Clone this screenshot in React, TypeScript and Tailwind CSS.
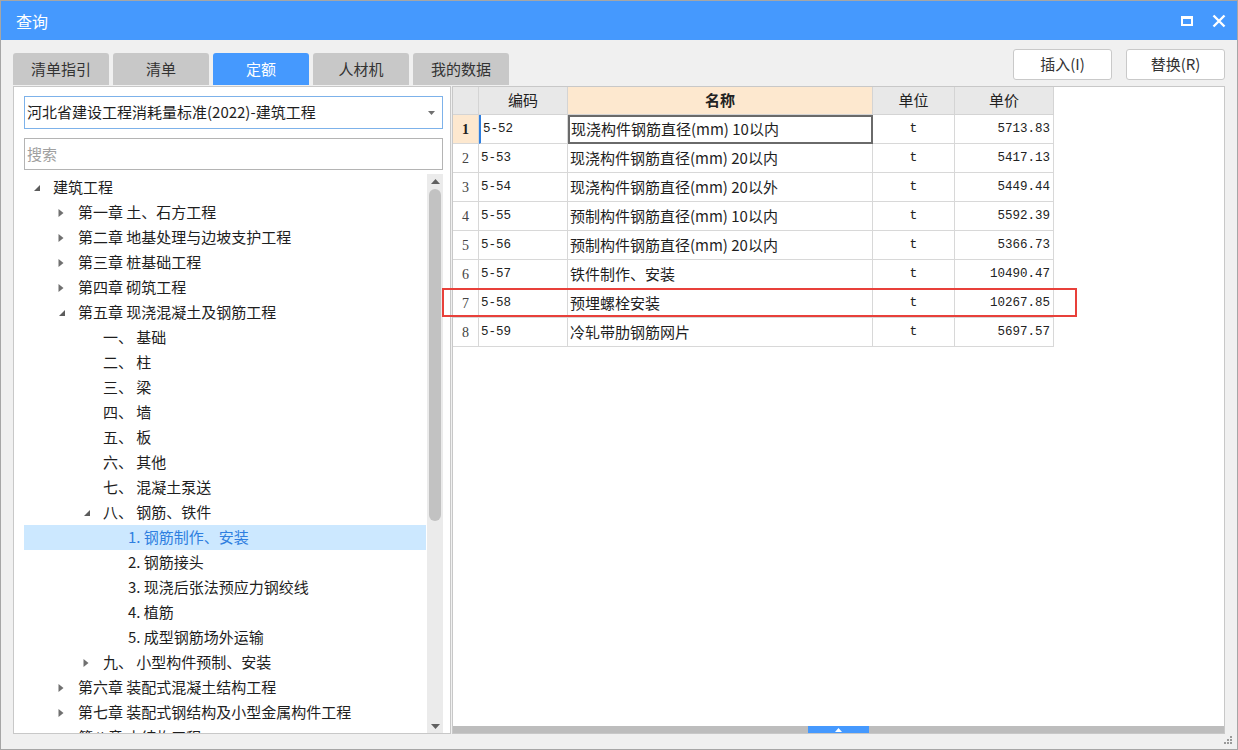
import React from "react";

type TreeNode = {
  level: number;
  label: string;
  state?: "open" | "closed";
  selected?: boolean;
};

const tree: TreeNode[] = [
  { level: 0, label: "建筑工程", state: "open" },
  { level: 1, label: "第一章 土、石方工程", state: "closed" },
  { level: 1, label: "第二章 地基处理与边坡支护工程", state: "closed" },
  { level: 1, label: "第三章 桩基础工程", state: "closed" },
  { level: 1, label: "第四章 砌筑工程", state: "closed" },
  { level: 1, label: "第五章 现浇混凝土及钢筋工程", state: "open" },
  { level: 2, label: "一、 基础" },
  { level: 2, label: "二、 柱" },
  { level: 2, label: "三、 梁" },
  { level: 2, label: "四、 墙" },
  { level: 2, label: "五、 板" },
  { level: 2, label: "六、 其他" },
  { level: 2, label: "七、 混凝土泵送" },
  { level: 2, label: "八、 钢筋、铁件", state: "open" },
  { level: 3, label: "1. 钢筋制作、安装", selected: true },
  { level: 3, label: "2. 钢筋接头" },
  { level: 3, label: "3. 现浇后张法预应力钢绞线" },
  { level: 3, label: "4. 植筋" },
  { level: 3, label: "5. 成型钢筋场外运输" },
  { level: 2, label: "九、 小型构件预制、安装", state: "closed" },
  { level: 1, label: "第六章 装配式混凝土结构工程", state: "closed" },
  { level: 1, label: "第七章 装配式钢结构及小型金属构件工程", state: "closed" },
  { level: 1, label: "第八章 木结构工程", state: "closed" },
];

const indent = ["pl-[8px]", "pl-[33px]", "pl-[58px]", "pl-[83px]"];

const rows = [
  ["5-52", "现浇构件钢筋直径(mm) 10以内", "t", "5713.83"],
  ["5-53", "现浇构件钢筋直径(mm) 20以内", "t", "5417.13"],
  ["5-54", "现浇构件钢筋直径(mm) 20以外", "t", "5449.44"],
  ["5-55", "预制构件钢筋直径(mm) 10以内", "t", "5592.39"],
  ["5-56", "预制构件钢筋直径(mm) 20以内", "t", "5366.73"],
  ["5-57", "铁件制作、安装", "t", "10490.47"],
  ["5-58", "预埋螺栓安装", "t", "10267.85"],
  ["5-59", "冷轧带肋钢筋网片", "t", "5697.57"],
];

const tabs = ["清单指引", "清单", "定额", "人材机", "我的数据"];

function Arrow({ state }: { state?: "open" | "closed" }) {
  if (state === "open")
    return (
      <svg width="8" height="8" viewBox="0 0 8 8" className="ml-[1px]">
        <polygon points="7,1 7,7 1,7" fill="#5c5c5c" />
      </svg>
    );
  if (state === "closed")
    return (
      <svg width="6" height="10" viewBox="0 0 6 10" className="ml-[1px]">
        <polygon points="0.5,1 5.5,5 0.5,9" fill="#707070" />
      </svg>
    );
  return null;
}

function TreeRow({ node }: { node: TreeNode }) {
  return (
    <div
      className={`flex shrink-0 items-center h-[25px] w-[402px] ${indent[node.level]} ${
        node.selected ? "bg-[#cce8ff] text-[#2f7fe0]" : "text-[#1e1e1e]"
      }`}
    >
      <div className="w-[21px] flex items-center">
        <Arrow state={node.state} />
      </div>
      <span className="whitespace-pre">{node.label}</span>
    </div>
  );
}

export default function App() {
  return (
    <div className="relative w-[1238px] h-[750px] border border-[#a6a6a6] bg-[#f0f0f0] flex flex-col font-['Noto_Sans_CJK_SC','Noto_Sans',sans-serif] text-[15px] overflow-hidden">
      {/* title bar */}
      <div className="h-[39px] bg-[#4599fe] flex items-center justify-between pl-[15px] pr-[11px] text-white">
        <span className="text-[16px]">查询</span>
        <div className="flex items-center gap-[19px]">
          <svg width="12" height="10" viewBox="0 0 12 10">
            <rect x="1" y="1.5" width="10" height="7.5" fill="none" stroke="white" strokeWidth="2" />
            <rect x="0" y="0" width="12" height="3" fill="white" />
          </svg>
          <svg width="14" height="14" viewBox="0 0 14 14">
            <path d="M1.5 1.5 L12.5 12.5 M12.5 1.5 L1.5 12.5" stroke="white" strokeWidth="2.4" />
          </svg>
        </div>
      </div>

      <div className="flex flex-col px-[12px]">
        {/* tabs + buttons */}
        <div className="pt-[9px] h-[46px] flex items-start justify-between">
          <div className="flex gap-[4px] mt-[4px]">
            {tabs.map((t) => (
              <div
                key={t}
                className={`w-[96px] h-[32px] rounded-t-[3px] flex items-center justify-center ${
                  t === "定额" ? "bg-[#4599fe] text-white" : "bg-[#c8c8c8] text-[#333]"
                }`}
              >
                {t}
              </div>
            ))}
          </div>
          <div className="flex gap-[14px]">
            <button className="w-[99px] h-[31px] bg-white border border-[#c9c9c9] rounded-[3px] text-[#333]">
              插入(I)
            </button>
            <button className="w-[99px] h-[31px] bg-white border border-[#c9c9c9] rounded-[3px] text-[#333]">
              替换(R)
            </button>
          </div>
        </div>

        {/* panels */}
        <div className="relative h-[648px] flex gap-[1px]">
          {/* left panel */}
          <div className="w-[438px] bg-white border border-[#c8c8c8] flex flex-col pl-[10px] pt-[9px]">
            <div className="w-[419px] h-[33px] border border-[#7db2ea] flex items-center justify-between pl-[2px] pr-[7px] text-[#1e1e1e]">
              <span>河北省建设工程消耗量标准(2022)-建筑工程</span>
              <svg width="7" height="4" viewBox="0 0 7 4">
                <polygon points="0,0 7,0 3.5,4" fill="#707070" />
              </svg>
            </div>
            <div className="mt-[9px] w-[419px] h-[32px] border border-[#b4b4b4] flex items-center pl-[2px] text-[#a0a0a0]">
              搜索
            </div>
            <div className="mt-[4px] flex-1 flex w-[419px] overflow-hidden">
              <div className="flex-1 flex flex-col overflow-hidden pt-[1px]">
                {tree.map((n) => (
                  <TreeRow key={n.label} node={n} />
                ))}
              </div>
              <div className="w-[16px] bg-[#ebebeb] flex flex-col items-center pt-[5px] pb-[4px]">
                <svg width="9" height="5" viewBox="0 0 9 5">
                  <polygon points="4.5,0 9,5 0,5" fill="#606060" />
                </svg>
                <div className="mt-[5px] w-[12px] h-[332px] rounded-full bg-[#c2c2c2]" />
                <div className="flex-1" />
                <svg width="9" height="5" viewBox="0 0 9 5">
                  <polygon points="0,0 9,0 4.5,5" fill="#606060" />
                </svg>
              </div>
            </div>
          </div>

          {/* right panel */}
          <div className="flex-1 bg-white border border-[#c8c8c8] flex flex-col">
            <div className="flex-1">
              <div className="grid grid-cols-[26px_89px_305px_82px_99px] w-[601px]">
                <div className="h-[28px] bg-[#e8e8e8] border-r border-b border-[#d4d4d4]" />
                <div className="h-[28px] bg-[#e8e8e8] border-r border-b border-[#d4d4d4] flex items-center justify-center text-[#222]">
                  编码
                </div>
                <div className="h-[28px] bg-[#fde8cf] border-r border-b border-[#d4d4d4] flex items-center justify-center font-bold text-[#222]">
                  名称
                </div>
                <div className="h-[28px] bg-[#e8e8e8] border-r border-b border-[#d4d4d4] flex items-center justify-center text-[#222]">
                  单位
                </div>
                <div className="h-[28px] bg-[#e8e8e8] border-r border-b border-[#d4d4d4] flex items-center justify-center text-[#222]">
                  单价
                </div>
                {rows.map((r, i) => (
                  <React.Fragment key={r[0]}>
                    <div
                      className={`h-[29px] border-r border-b border-[#d8d8d8] flex items-center justify-center font-['Liberation_Serif',serif] text-[14px] ${
                        i === 0 ? "bg-[#fde8cf] font-bold text-[#222]" : "text-[#444]"
                      }`}
                    >
                      {i + 1}
                    </div>
                    <div
                      className={`h-[29px] border-r border-b border-[#d8d8d8] flex items-center pl-[2px] font-['Liberation_Mono',monospace] text-[12.5px] text-[#222] ${
                        i === 0 ? "border-l-2 border-l-[#2f7fe0] pl-[1px]" : ""
                      }`}
                    >
                      {r[0]}
                    </div>
                    <div
                      className={`h-[29px] flex items-center text-[#1e1e1e] whitespace-pre ${
                        i === 0
                          ? "border-2 border-[#6a6a6a] pl-[1px]"
                          : "border-r border-b border-[#d8d8d8] pl-[2px]"
                      }`}
                    >
                      {r[1]}
                    </div>
                    <div className="h-[29px] border-r border-b border-[#d8d8d8] flex items-center justify-center font-['Liberation_Mono',monospace] text-[13px] text-[#222]">
                      {r[2]}
                    </div>
                    <div className="h-[29px] border-r border-b border-[#d8d8d8] flex items-center justify-end pr-[3px] font-['Liberation_Mono',monospace] text-[12.5px] text-[#222]">
                      {r[3]}
                    </div>
                  </React.Fragment>
                ))}
              </div>
            </div>
            <div className="h-[7px] bg-[#bdbdbd] flex">
              <div className="ml-[355px] w-[61px] h-full bg-[#4599fe] flex items-center justify-center">
                <svg width="7" height="4" viewBox="0 0 7 4">
                  <polygon points="3.5,0 7,4 0,4" fill="white" />
                </svg>
              </div>
            </div>
          </div>

          {/* highlight */}
          <div className="absolute left-[429px] top-[202px] w-[635px] h-[29px] border-2 border-[#e8403a] pointer-events-none" />
        </div>
      </div>

      {/* resize grip */}
      <svg width="10" height="10" viewBox="0 0 10 10" className="absolute right-[4px] bottom-[4px]">
        <rect x="7" y="1" width="2" height="2" fill="#9a9a9a" />
        <rect x="4" y="4" width="2" height="2" fill="#9a9a9a" />
        <rect x="7" y="4" width="2" height="2" fill="#9a9a9a" />
        <rect x="1" y="7" width="2" height="2" fill="#9a9a9a" />
        <rect x="4" y="7" width="2" height="2" fill="#9a9a9a" />
        <rect x="7" y="7" width="2" height="2" fill="#9a9a9a" />
      </svg>
    </div>
  );
}
